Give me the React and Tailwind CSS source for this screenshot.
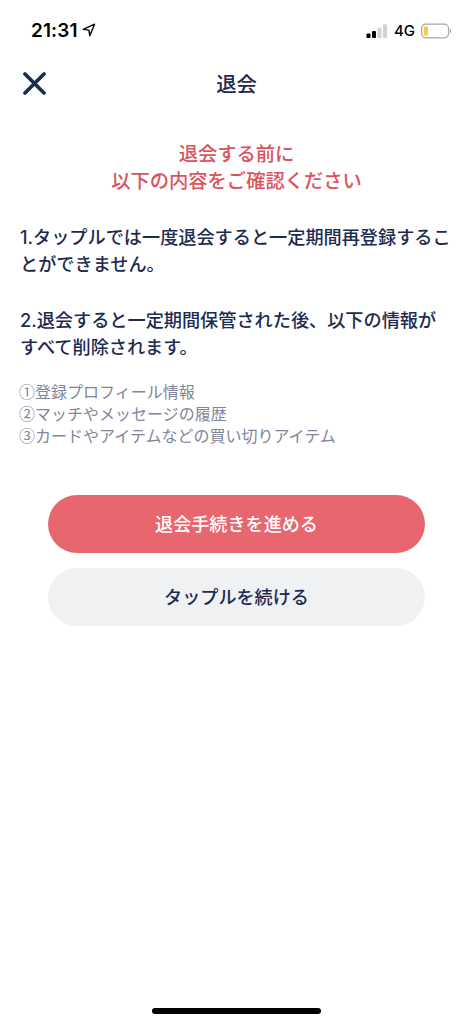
const removedItems = [
  '①登録プロフィール情報',
  '②マッチやメッセージの履歴',
  '③カードやアイテムなどの買い切りアイテム',
]

function StatusBar() {
  return (
    <div className="flex h-[61px] items-center pl-[31px] pr-[21px] font-['Inter',sans-serif] text-black">
      <span className="text-[19px] font-semibold leading-6 tracking-[0.1px]">21:31</span>
      <svg className="ml-[4px] mt-[-2px] h-[14px] w-[14px]" viewBox="0 0 14 14" fill="none" stroke="currentColor" strokeWidth="1.4" strokeLinejoin="round">
        <path d="M1.2 6.4 12.6 1.2 7.8 12.8 6.9 7.1Z" />
      </svg>
      <svg className="ml-auto h-4 w-[22px]" viewBox="0 0 22 16">
        <rect x="0.5" y="10.5" width="4" height="4.5" rx="1" />
        <rect x="6" y="8" width="4" height="7" rx="1" />
        <rect x="11.5" y="4.5" width="4" height="10.5" rx="1" fill="#d2d2d4" />
        <rect x="17" y="1.3" width="4" height="13.7" rx="1" fill="#d2d2d4" />
      </svg>
      <span className="ml-[6px] text-[15px] font-medium leading-6">4G</span>
      <svg className="ml-[6px] h-4 w-[31px]" viewBox="0 0 31 16">
        <rect x="0.7" y="1.2" width="26.8" height="13.6" rx="4" fill="none" stroke="#a6a6a8" strokeWidth="1.2" />
        <rect x="2.8" y="3.2" width="4.2" height="9.6" rx="1.6" fill="#f8cb46" />
        <path d="M28.8 5.7c1.8.5 1.8 4.1 0 4.6Z" fill="#a6a6a8" />
      </svg>
    </div>
  )
}

function App() {
  return (
    <div className="flex h-screen w-full flex-col bg-white font-['Noto_Sans_CJK_JP',sans-serif] text-[#1d2b50]">
      <StatusBar />

      <header className="grid h-[45px] grid-cols-3 items-center px-[23px]">
        <button aria-label="閉じる">
          <svg className="h-[23px] w-[23px]" viewBox="0 0 23 23" stroke="currentColor" strokeWidth="3.7" strokeLinecap="round">
            <path d="M2 2 21 21M21 2 2 21" />
          </svg>
        </button>
        <h1 className="pb-px text-center text-[20.3px] font-medium leading-7">退会</h1>
      </header>

      <main className="px-[19px] pt-[34px]">
        <h2 className="text-center text-[19.3px] font-medium leading-[27px] text-[#d9545e]">
          退会する前に<br />以下の内容をご確認ください
        </h2>

        <div className="mt-[30px] flex flex-col gap-[29px] whitespace-nowrap pl-px font-['Inter','Noto_Sans_CJK_JP',sans-serif] text-[18.17px] font-medium leading-[27px]">
          <p>1.タップルでは一度退会すると一定期間再登録するこ<br />とができません。</p>
          <p>2.退会すると一定期間保管された後、以下の情報が<br />すべて削除されます。</p>
        </div>

        <ul className="mt-[19px] text-[16px] leading-[22px] text-[#80869b]">
          {removedItems.map(item => <li key={item}>{item}</li>)}
        </ul>

        <div className="mx-[29px] mt-[49px] flex flex-col gap-[15px] text-[18.1px] font-medium">
          <button className="h-[58px] rounded-full bg-[#e8676f] text-white">退会手続きを進める</button>
          <button className="h-[58px] rounded-full bg-[#f0f1f3]">タップルを続ける</button>
        </div>
      </main>

      <div className="mx-auto mb-[10px] mt-auto h-[6px] w-[169px] rounded-full bg-black" />
    </div>
  )
}

export default App
